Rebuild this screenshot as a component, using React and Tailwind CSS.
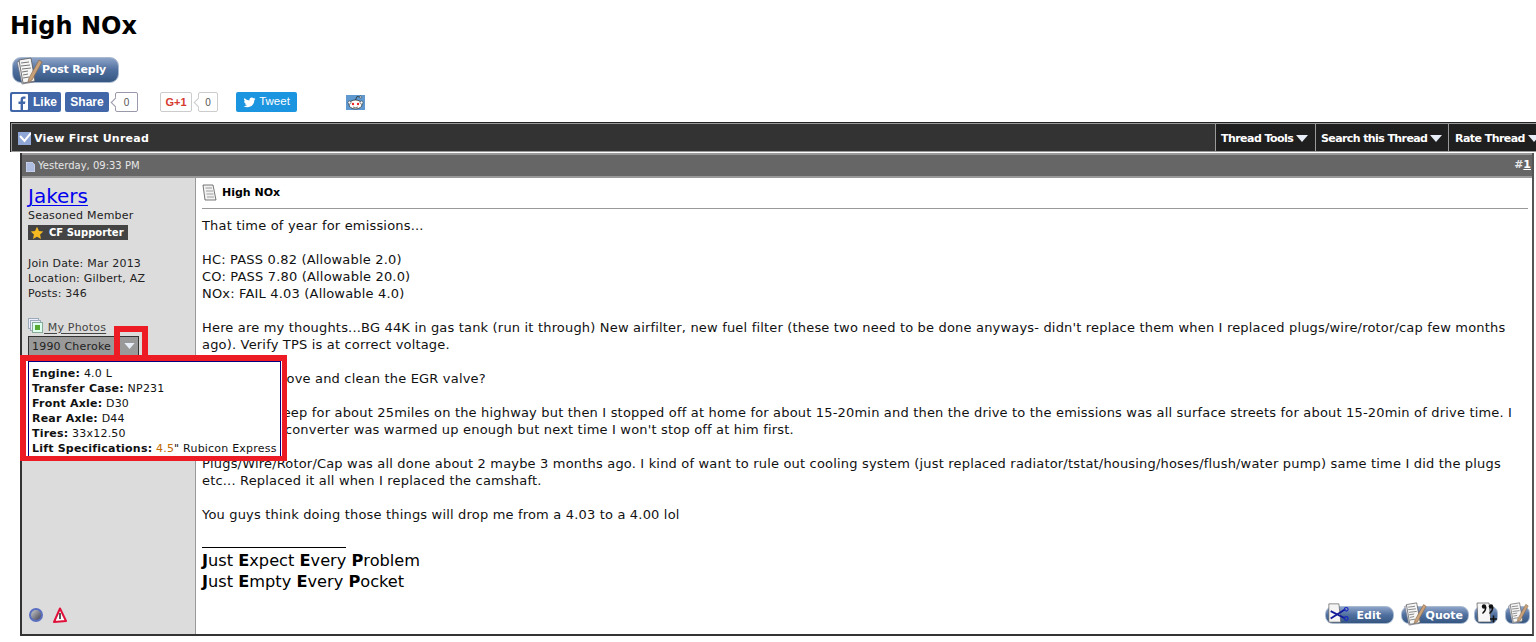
import React from "react";

function PaperPen({ className = "w-7 h-7" }) {
  return (
    <svg viewBox="0 0 28 28" className={className}>
      <path d="M2 5 L14 2 L19 25 L7 27 Z" fill="#e4e8ee" stroke="#667" strokeWidth="0.7" />
      <path d="M4 3 L16 1 L20 24 L8 26 Z" fill="#f6f6f6" stroke="#555" strokeWidth="0.8" />
      <path d="M6 6 L14 5 M6 9 L15 8 M7 12 L16 11 M7 15 L13 14 M8 18 L13 17 M8 21 L14 20" stroke="#777" strokeWidth="1" />
      <path d="M14 21 L24 3 L27 5 L17 23 L13 25 Z" fill="#c9a27c" stroke="#8a6a4a" strokeWidth="0.7" />
    </svg>
  );
}

function Pill({ children, icon, className = "", iconClass = "-top-[5px]" }) {
  return (
    <span className={`relative inline-flex items-center rounded-[9px] bg-gradient-to-b from-[#8ea4c8] via-[#4f6f9f] to-[#365681] border border-[#a9b9d0] text-white font-bold ${className}`}>
      <span className={`absolute left-[1px] ${iconClass}`}>{icon}</span>
      {children}
    </span>
  );
}

function Caret({ className = "" }) {
  return (
    <svg viewBox="0 0 12 7" className={`inline-block h-[7px] w-[12px] shrink-0 ${className}`}>
      <path d="M0 0 H12 L6 7 Z" fill="#e8eef7" />
    </svg>
  );
}

function Count({ n, color, w = "w-[22px]" }) {
  return (
    <span className={`relative ml-[6px] inline-flex h-[20px] ${w} items-center justify-center rounded-[2px] border bg-white text-[10px] font-normal text-[#555] ${color}`}>
      <span className={`absolute -left-[4px] top-[6px] h-[7px] w-[7px] rotate-45 border-b border-l bg-white ${color}`}></span>
      <span className="relative">{n}</span>
    </span>
  );
}

function Spec({ k, v }) {
  return (
    <div className="h-[15px] whitespace-nowrap leading-[15px]">
      <b>{k}:</b> {v}
    </div>
  );
}

export default function App() {
  return (
    <div className="relative h-[642px] w-[1536px] overflow-hidden bg-white pl-[10px] text-black [font-family:'DejaVu_Sans',Verdana,sans-serif]">
      <h1 className="pt-[10px] text-[24px] font-bold leading-[33px]">High NOx</h1>

      <div className="mt-[14px] flex h-[26px] pl-[2px]">
        <Pill className="h-[26px] w-[107px] justify-end pr-[12px] text-[11px] tracking-[-0.2px]" iconClass="-top-[1px]" icon={<PaperPen className="h-[28px] w-[30px]" />}>
          <span className="pt-[1px]">Post Reply</span>
        </Pill>
      </div>

      <div className="mt-[9px] flex h-[20px] items-center text-[12px] font-bold text-white [font-family:'Liberation_Sans',Arial,sans-serif]">
        <span className="flex h-[20px] w-[51px] items-center rounded-[2px] bg-[#4267a8] pl-[2px]">
          <svg viewBox="0 0 16 16" className="h-[16px] w-[16px]"><rect width="16" height="16" rx="1" fill="#fff" /><path d="M11 16V10h2l.4-2.4H11V6c0-.8.3-1.2 1.2-1.2h1.3V2.6C13 2.5 12.3 2.5 11.6 2.5 9.8 2.5 8.6 3.6 8.6 5.700V7.600H6.500V10h2.100v6z" fill="#4267a8" /></svg>
          <span className="ml-[5px]">Like</span>
        </span>
        <span className="ml-[4px] flex h-[20px] w-[44px] items-center justify-center rounded-[2px] bg-[#4267a8]">Share</span>
        <Count n="0" color="border-[#99a]" w="w-[23px]" />
        <span className="ml-[22px] flex h-[20px] w-[32px] items-center justify-center rounded-[2px] border border-[#ccc] bg-white text-[11px] text-[#d63a2f]">G+1</span>
        <Count n="0" color="border-[#ccc]" w="w-[20px]" />
        <span className="ml-[18px] flex h-[20px] w-[61px] items-center justify-center rounded-[2px] bg-[#1b95e0] text-[11.500px] font-normal">
          <svg viewBox="0 0 24 24" className="mr-[3px] h-[13px] w-[13px]" fill="#fff"><path d="M23 5a9 9 0 0 1-2.600.7 4.600 4.600 0 0 0 2-2.500 9 9 0 0 1-2.900 1.100 4.500 4.500 0 0 0-7.700 4.100A12.900 12.900 0 0 1 2.500 3.700a4.500 4.500 0 0 0 1.400 6A4.500 4.500 0 0 1 1.800 9.100a4.500 4.500 0 0 0 3.600 4.500 4.500 4.500 0 0 1-2 .1 4.500 4.500 0 0 0 4.200 3.100A9.100 9.100 0 0 1 1 18.800 12.800 12.800 0 0 0 8 20.800c8.300 0 12.900-6.900 12.900-12.900v-.6A9.200 9.200 0 0 0 23 5z" /></svg>
          Tweet
        </span>
        <span className="ml-[49px] flex h-[15px] w-[19px] items-center justify-center bg-[#5f99cf]">
          <svg viewBox="0 0 19 15" className="h-[15px] w-[19px]">
            <ellipse cx="9.500" cy="9.500" rx="6.500" ry="4.500" fill="#fff" stroke="#222" strokeWidth="0.7" />
            <circle cx="3.500" cy="7.500" r="1.500" fill="#fff" stroke="#222" strokeWidth="0.5" />
            <circle cx="15.500" cy="7.500" r="1.500" fill="#fff" stroke="#222" strokeWidth="0.5" />
            <circle cx="7" cy="9" r="1.200" fill="#e22" />
            <circle cx="12" cy="9" r="1.200" fill="#e22" />
            <path d="M7 12 Q9.500 13.500 12 12" stroke="#222" strokeWidth="0.6" fill="none" />
            <path d="M9.500 5 L11 1.500 L14 2" stroke="#222" strokeWidth="0.7" fill="none" />
            <circle cx="14.500" cy="2" r="1" fill="#fff" stroke="#222" strokeWidth="0.5" />
          </svg>
        </span>
      </div>

      {/* thread toolbar */}
      <div className="mt-[10px] flex h-[30px] w-[1540px] items-stretch border-x border-t border-b-0 border-[#222] bg-[#333] text-[11px] font-bold text-white shadow-[inset_0_1px_0_#999,inset_1px_0_0_#999,inset_0_-1px_0_#999]">
        <div className="flex flex-1 items-center pl-[7px] tracking-[0.25px]">
          <svg viewBox="0 0 13 13" className="mr-[3px] mt-[2px] h-[13px] w-[13px]">
            <rect width="13" height="13" fill="#8fa6d6" />
            <path d="M2 4 L6.500 9 L13 1" stroke="#fff" strokeWidth="2" fill="none" />
          </svg>
          <span className="pt-[3px]">View First Unread</span>
        </div>
        <div className="my-[1px] flex w-[100px] items-center gap-[3px] whitespace-nowrap border-l border-[#999] bg-[#1f1f1f] pl-[5px] tracking-[-0.55px]"><span className="pt-[3px]">Thread Tools</span> <Caret className="mt-[2px]" /></div>
        <div className="my-[1px] flex w-[133px] items-center gap-[3px] whitespace-nowrap border-l border-[#999] bg-[#1f1f1f] pl-[5px] tracking-[-0.6px]"><span className="pt-[3px]">Search this Thread</span> <Caret className="mt-[2px]" /></div>
        <div className="my-[1px] flex w-[101px] items-center gap-[3px] whitespace-nowrap border-l border-[#999] bg-[#1f1f1f] pl-[6px] tracking-[-0.55px]"><span className="pt-[3px]">Rate Thread</span> <Caret className="mt-[2px]" /></div>
      </div>

      {/* post */}
      <div className="ml-[10px] mt-[1px] flex h-[483px] w-[1514px] flex-col border-2 border-t-0 border-[#333] border-r-[#555]">
        <div className="flex h-[25px] items-center justify-between border-y-2 border-[#999] bg-[#666] pl-[4px] pr-[1px] text-[10px] text-[#e6e6e6]">
          <span className="flex items-center">
            <svg viewBox="0 0 9 10" className="mr-[3px] mt-[2px] h-[10px] w-[9px]"><path d="M0 0 H6 L9 3 V10 H0 Z" fill="#aebde0" stroke="#fff" strokeWidth="0.5" /></svg>
            Yesterday, 09:33 PM
          </span>
          <span className="text-[11px] font-bold">#<span className="text-white underline">1</span></span>
        </div>
        <div className="flex flex-1">
          <aside className="flex w-[174px] shrink-0 flex-col border-r border-[#999] bg-[#dcdcdc] pl-[6px] text-[11px] leading-[15px] tracking-[0.2px] text-[#222]">
            <a className="mt-[6px] w-fit text-[20px] leading-[24px] tracking-normal text-[#0000ee] underline decoration-1 underline-offset-2">Jakers</a>
            <div className="leading-[15px]">Seasoned Member</div>
            <div className="mt-[2px] flex h-[15px] w-[100px] items-center bg-[#444] pl-[2px] text-[10px] font-bold tracking-normal text-white">
              <svg viewBox="0 0 20 20" className="mr-[5px] h-[14px] w-[14px]"><path d="M10 1 L12.800 7 L19 7.700 L14.400 12 L15.700 18.500 L10 15.200 L4.300 18.500 L5.600 12 L1 7.700 L7.200 7 Z" fill="#f5b921" /></svg>
              CF Supporter
            </div>
            <div className="mt-[16px]">Join Date: Mar 2013</div>
            <div>Location: Gilbert, AZ</div>
            <div>Posts: 346</div>
            <div className="mt-[18px] flex h-[16px] items-center text-[#444]">
              <svg viewBox="0 0 15 15" className="mr-[1px] -mt-[3px] h-[15px] w-[15px]">
                <rect x="0.500" y="0.500" width="10" height="10" fill="#eef" stroke="#9ab" />
                <rect x="2.500" y="2.500" width="10" height="10" fill="#eef" stroke="#9ab" />
                <rect x="4.500" y="4.500" width="10" height="10" fill="#dfe" stroke="#8a9" />
                <rect x="7" y="7" width="5" height="5" fill="#5a3" />
              </svg>
              <span className="whitespace-pre underline underline-offset-2"> My Photos</span>
            </div>
            <div className="mt-[1px] flex h-[20px] w-[111px] items-center justify-between overflow-hidden border border-[#333] bg-[#999] pl-[3px] pr-[3px]">
              <span className="whitespace-nowrap">1990 Cheroke</span>
              <Caret className="!h-[6px] !w-[11px]" />
            </div>
            <div className="mb-[11px] mt-auto flex items-center gap-[9px] pl-[1px]">
              <span className="h-[14px] w-[14px] rounded-full border-2 border-[#5a6fc0] bg-gradient-to-br from-[#ccc] to-[#445]"></span>
              <svg viewBox="0 0 16 16" className="h-[16px] w-[16px]"><path d="M8 1.500 L14 14 L2 15 Z" fill="#fff" stroke="#e0103a" strokeWidth="2" strokeLinejoin="round" /><path d="M8 6 V12" stroke="#222" strokeWidth="1.500" /></svg>
            </div>
          </aside>

          <main className="relative flex-1 pl-[6px] pr-[4px] text-[13px] leading-[17px] tracking-[0.18px] text-[#111]">
            <div className="flex h-[31px] items-center border-b border-[#999] pb-[2px] text-[11px] font-bold tracking-normal text-black">
              <svg viewBox="0 0 15 17" className="mr-[5px] h-[17px] w-[15px]">
                <path d="M1 1 H11 L14 16 H3 Z" fill="#f2f2f2" stroke="#555" strokeWidth="0.8" />
                <path d="M3.500 4 H10 M4 7 H11 M4.500 10 H11.500 M5 13 H12" stroke="#888" strokeWidth="0.8" />
              </svg>
              High NOx
            </div>
            <div className="pt-[8px]">
              <p>That time of year for emissions...</p>
              <p className="mt-[17px]">HC: PASS 0.82 (Allowable 2.0)</p>
              <p>CO: PASS 7.80 (Allowable 20.0)</p>
              <p>NOx: FAIL 4.03 (Allowable 4.0)</p>
              <p className="mt-[17px]">Here are my thoughts...BG 44K in gas tank (run it through) New airfilter, new fuel filter (these two need to be done anyways- didn't replace them when I replaced plugs/wire/rotor/cap few months ago). Verify TPS is at correct voltage.</p>
              <p className="mt-[17px]">Should I remove and clean the EGR valve?</p>
              <p className="mt-[17px]">I drove the Jeep for about 25miles on the highway but then I stopped off at home for about 15-20min and then the drive to the emissions was all surface streets for about 15-20min of drive time. I thought the converter was warmed up enough but next time I won't stop off at him first.</p>
              <p className="mt-[17px]">Plugs/Wire/Rotor/Cap was all done about 2 maybe 3 months ago. I kind of want to rule out cooling system (just replaced radiator/tstat/housing/hoses/flush/water pump) same time I did the plugs etc... Replaced it all when I replaced the camshaft.</p>
              <p className="mt-[17px]">You guys think doing those things will drop me from a 4.03 to a 4.00 lol</p>
              <div className="mt-[24px] h-px w-[144px] bg-black"></div>
              <div className="mt-[2px] text-[16.200px] leading-[21px] tracking-normal text-black">
                <div><b>J</b>ust <b>E</b>xpect <b>E</b>very <b>P</b>roblem</div>
                <div><b>J</b>ust <b>E</b>mpty <b>E</b>very <b>P</b>ocket</div>
              </div>
            </div>
            <div className="absolute bottom-[10px] right-[2px] flex items-center text-[11px] tracking-normal">
              <Pill className="h-[18px] w-[69px] justify-end !rounded-[8px] pr-[12px]" icon={
                <svg viewBox="0 0 24 24" className="h-[22px] w-[22px]">
                  <path d="M2 2 H13 L15 22 H2 Z" fill="#f4f4f4" stroke="#555" strokeWidth="0.7" />
                  <path d="M4 10 L20 18 M4 18 L20 8" stroke="#111a9a" strokeWidth="2" />
                  <circle cx="21" cy="8" r="2" fill="none" stroke="#1a2ac0" strokeWidth="1.300" />
                  <circle cx="21" cy="18" r="2" fill="none" stroke="#1a2ac0" strokeWidth="1.300" />
                </svg>
              }>Edit</Pill>
              <Pill className="ml-[7px] h-[18px] w-[68px] justify-end !rounded-[8px] pr-[5px]" icon={<PaperPen className="h-[24px] w-[24px]" />}>Quote</Pill>
              <Pill className="ml-[5px] h-[18px] w-[24px] !rounded-[7px]" icon={
                <svg viewBox="0 0 22 22" className="h-[22px] w-[22px]">
                  <path d="M1 1 H13 L15 20 H2 Z" fill="#f6f6f6" stroke="#555" strokeWidth="0.7" />
                  <circle cx="8" cy="4.500" r="2.200" fill="#111" />
                  <circle cx="15" cy="4.500" r="2.200" fill="#111" />
                  <path d="M9.800 5 C9.800 8 8.500 10 6.500 11.500 M16.800 5 C16.800 8 15.500 10 13.500 11.500" stroke="#111" strokeWidth="1.400" fill="none" />
                  <path d="M14 17 H21 M17.500 13.500 V20.500" stroke="#111" strokeWidth="1.500" />
                </svg>
              }><span></span></Pill>
              <Pill className="ml-[7px] h-[18px] w-[25px] !rounded-[7px]" icon={<PaperPen className="h-[22px] w-[22px]" />}><span></span></Pill>
            </div>
          </main>
        </div>
      </div>

      {/* vehicle popup and the annotation boxes that lie over the post */}
      <div className="absolute left-[20px] top-[355px] h-[106px] w-[267px] border-[5px] border-l-[6px] border-t-[6px] border-[#ed1c24] bg-white">
        <div className="ml-[2px] h-[95px] w-[253px] border border-b-0 border-[#000080] pl-[3px] pt-[4px] text-[11px] tracking-[0.21px] text-[#111]">
          <Spec k="Engine" v="4.0 L" />
          <Spec k="Transfer Case" v="NP231" />
          <Spec k="Front Axle" v="D30" />
          <Spec k="Rear Axle" v="D44" />
          <Spec k="Tires" v="33x12.50" />
          <Spec k="Lift Specifications" v={<span><span className="text-[#c06a00]">4.5</span>" Rubicon Express</span>} />
        </div>
      </div>
      <div className="absolute left-[114px] top-[326px] h-[35px] w-[34px] border-[6px] border-b-0 border-[#ed1c24]"></div>
    </div>
  );
}
